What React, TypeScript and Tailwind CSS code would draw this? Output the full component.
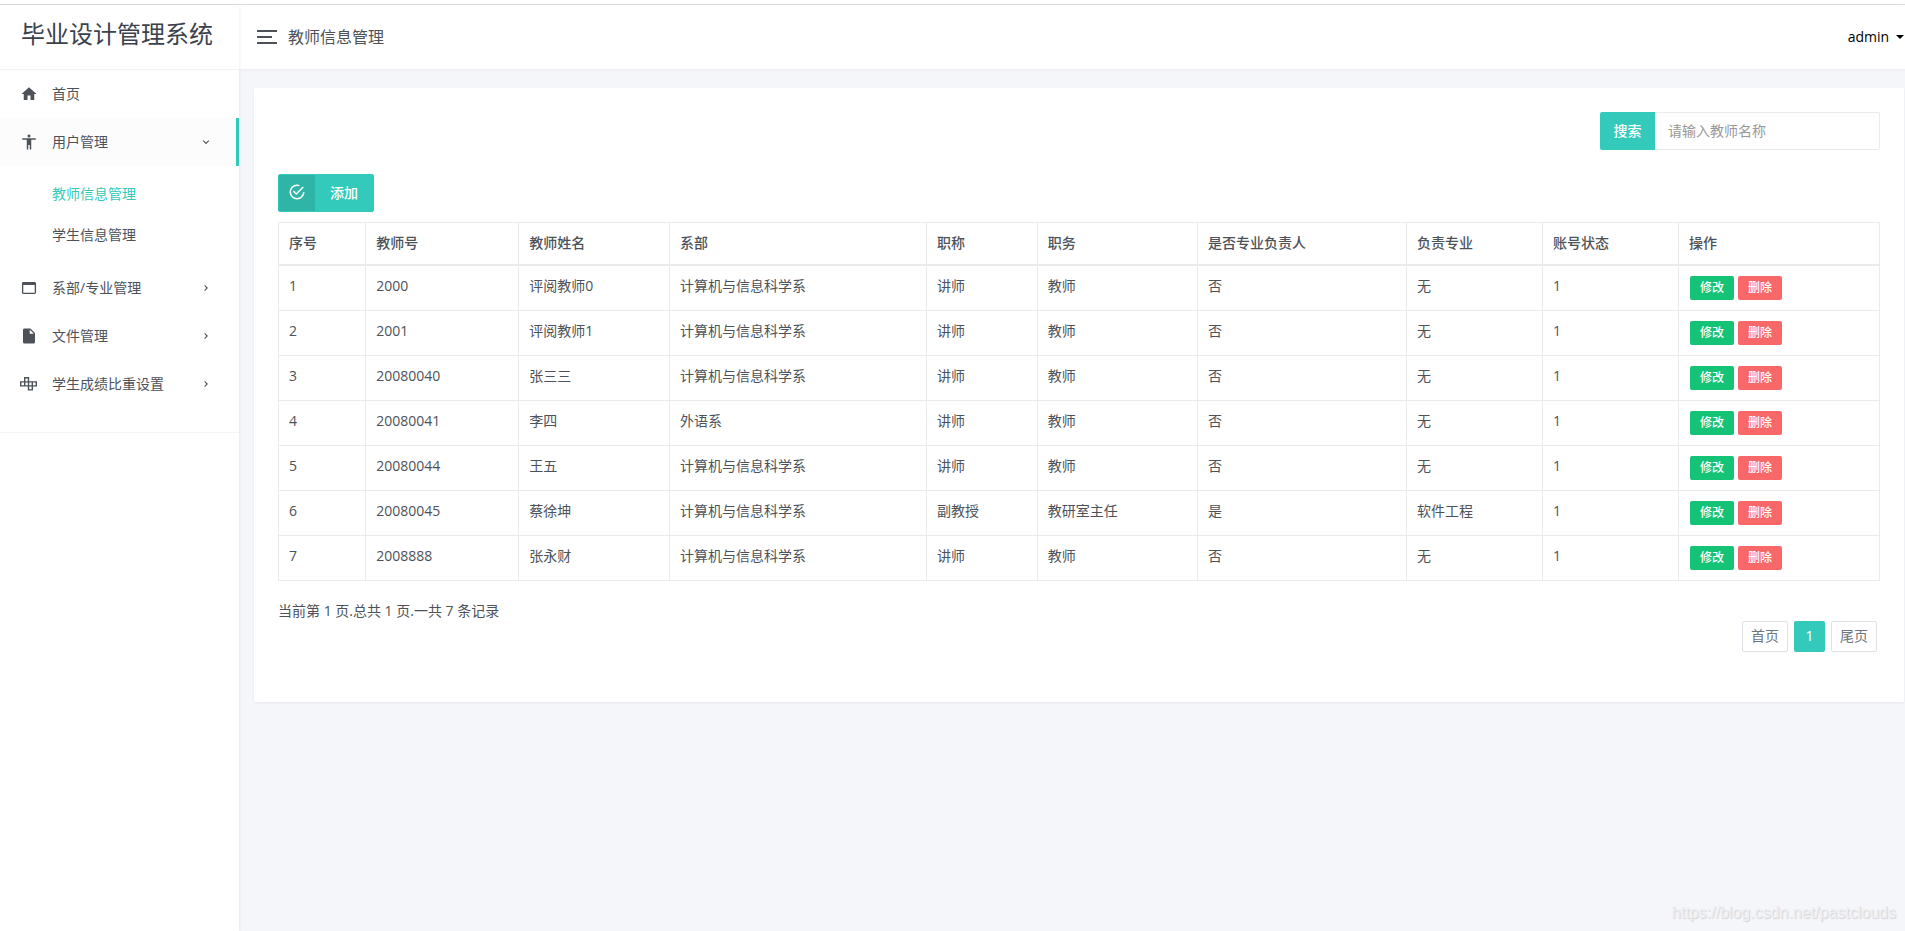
import React from "react";

const menuIcons = {
  home: "M10,20V14H14V20H19V12H22L12,3L2,12H5V20H10Z",
  person:
    "M12,2A2,2 0 0,1 14,4C14,5.11 13.1,6 12,6A2,2 0 0,1 10,4C10,2.89 10.89,2 12,2M21,9H15V22H13V16H11V22H9V9H3V7H21V9Z",
  window:
    "M4.5,4H19.5A1.9,1.9 0 0,1 21.4,5.9V18.1A1.9,1.9 0 0,1 19.5,20H4.5A1.9,1.9 0 0,1 2.6,18.1V5.9A1.9,1.9 0 0,1 4.5,4M4.4,8V18.2H19.6V8H4.4Z",
  file: "M13,9V3.5L18.5,9M6,2C4.89,2 4,2.89 4,4V20A2,2 0 0,0 6,22H18A2,2 0 0,0 20,20V8L14,2H6Z",
  check:
    "M20,12A8,8 0 0,1 12,20A8,8 0 0,1 4,12A8,8 0 0,1 12,4C12.76,4 13.5,4.11 14.2,4.31L15.77,2.74C14.61,2.26 13.34,2 12,2A10,10 0 0,0 2,12A10,10 0 0,0 12,22A10,10 0 0,0 22,12H20M7.91,10.08L6.5,11.5L11,16L21,6L19.59,4.58L11,13.17L7.91,10.08Z",
};

function Icon({ d }: { d: string }) {
  return (
    <svg viewBox="0 0 24 24" fill="currentColor" fillRule="evenodd" aria-hidden="true" className="size-[18px] shrink-0">
      <path d={d} />
    </svg>
  );
}

function BlocksIcon() {
  return (
    <svg viewBox="0 0 18 14" fill="none" stroke="currentColor" strokeWidth="1.4" aria-hidden="true" className="h-3.5 w-[18px] shrink-0">
      <path d="M4.7,0.7H8.5V4.9H16.3V8.9H12.3V12.9H8.5V8.9H0.7V4.9H4.7ZM4.7,4.9V8.9M8.5,4.9V8.9M12.3,4.9V8.9M4.7,4.9H8.5M8.5,8.9H12.3" />
    </svg>
  );
}

function Chevron({ open = false }: { open?: boolean }) {
  return (
    <svg
      viewBox="0 0 8 8"
      fill="none"
      stroke="currentColor"
      strokeWidth="1.1"
      aria-hidden="true"
      className="ml-auto mr-[26px] size-2"
    >
      <path d={open ? "M1.2,2.6L4,5.4L6.8,2.6" : "M2.6,1.4L5.2,4L2.6,6.6"} />
    </svg>
  );
}

function MenuItem({ icon, label, state }: { icon: React.ReactNode; label: string; state?: "open" | "closed" }) {
  const open = state === "open";
  return (
    <a
      href="#"
      className={`flex h-12 items-center pl-5 ${open ? "border-r-3 border-[#33cabb] bg-[#fcfcfc]" : "pr-[3px]"}`}
    >
      <span className="flex w-[18px] justify-center">{icon}</span>
      <span className="ml-3.5">{label}</span>
      {state && <Chevron open={open} />}
    </a>
  );
}

const columns = [
  { title: "序号", width: "w-[5.45%]" },
  { title: "教师号", width: "w-[9.55%]" },
  { title: "教师姓名", width: "w-[9.43%]" },
  { title: "系部", width: "w-[16.04%]" },
  { title: "职称", width: "w-[6.93%]" },
  { title: "职务", width: "w-[10%]" },
  { title: "是否专业负责人", width: "w-[13.05%]" },
  { title: "负责专业", width: "w-[8.5%]" },
  { title: "账号状态", width: "w-[8.5%]" },
  { title: "操作", width: "w-[12.55%]" },
];

const rows = [
  ["1", "2000", "评阅教师0", "计算机与信息科学系", "讲师", "教师", "否", "无", "1"],
  ["2", "2001", "评阅教师1", "计算机与信息科学系", "讲师", "教师", "否", "无", "1"],
  ["3", "20080040", "张三三", "计算机与信息科学系", "讲师", "教师", "否", "无", "1"],
  ["4", "20080041", "李四", "外语系", "讲师", "教师", "否", "无", "1"],
  ["5", "20080044", "王五", "计算机与信息科学系", "讲师", "教师", "否", "无", "1"],
  ["6", "20080045", "蔡徐坤", "计算机与信息科学系", "副教授", "教研室主任", "是", "软件工程", "1"],
  ["7", "2008888", "张永财", "计算机与信息科学系", "讲师", "教师", "否", "无", "1"],
];

function Sidebar() {
  return (
    <aside className="z-10 flex w-[239px] shrink-0 flex-col bg-white shadow-[0_1px_4px_rgba(0,21,41,0.08)]">
      <div className="h-[65px] border-b border-[#f2f3f5] pl-[21px] pt-[11px]">
        <a href="#" className="block whitespace-nowrap text-2xl leading-9 text-[#3b424c]">
          毕业设计管理系统
        </a>
      </div>
      <nav className="border-b border-[#f4f4f5] pb-6">
        <MenuItem icon={<Icon d={menuIcons.home} />} label="首页" />
        <MenuItem icon={<Icon d={menuIcons.person} />} label="用户管理" state="open" />
        <div className="flex flex-col pb-[9px] pt-[7px]">
          <a href="#" className="flex h-[41px] items-center pl-[52px] text-[#33cabb]">
            教师信息管理
          </a>
          <a href="#" className="flex h-[41px] items-center pl-[52px]">
            学生信息管理
          </a>
        </div>
        <MenuItem icon={<Icon d={menuIcons.window} />} label="系部/专业管理" state="closed" />
        <MenuItem icon={<Icon d={menuIcons.file} />} label="文件管理" state="closed" />
        <MenuItem icon={<BlocksIcon />} label="学生成绩比重设置" state="closed" />
      </nav>
    </aside>
  );
}

function TopBar() {
  return (
    <header className="flex h-16 items-center bg-white pl-[18px] shadow-[0_1px_3px_rgba(0,21,41,0.05)]">
      <button type="button" aria-label="菜单" className="flex w-5 flex-col gap-1">
        <span className="h-0.5 w-5 bg-[#4d5259]" />
        <span className="h-0.5 w-[15px] bg-[#4d5259]" />
        <span className="h-0.5 w-5 bg-[#4d5259]" />
      </button>
      <h1 className="ml-[11px] text-base">教师信息管理</h1>
      <button type="button" className="ml-auto flex items-center gap-[7px] pr-px text-black">
        admin
        <span className="border-x-4 border-t-4 border-x-transparent border-t-black" />
      </button>
    </header>
  );
}

function TeacherTable() {
  return (
    <table className="mt-2.5 w-full table-fixed border-collapse border border-[#ebebeb] text-left">
      <thead>
        <tr>
          {columns.map((c) => (
            <th
              key={c.title}
              scope="col"
              className={`${c.width} h-[42px] border border-b-2 border-[#ebebeb] px-2.5 align-middle font-medium`}
            >
              {c.title}
            </th>
          ))}
        </tr>
      </thead>
      <tbody>
        {rows.map((row) => (
          <tr key={row[0]} className="h-[45px] first:h-[46px]">
            {row.map((cell, i) => (
              <td key={i} className="border border-[#ebebeb] px-2.5 pt-2.5 align-top leading-5">
                {cell}
              </td>
            ))}
            <td className="border border-[#ebebeb] px-[11px] pt-2.5 align-top">
              <div className="flex gap-1 text-xs font-medium text-white">
                <button type="button" className="h-6 w-11 rounded-xs bg-[#15c377]">
                  修改
                </button>
                <button type="button" className="h-6 w-11 rounded-xs bg-[#f96868]">
                  删除
                </button>
              </div>
            </td>
          </tr>
        ))}
      </tbody>
    </table>
  );
}

export default function App() {
  return (
    <div className="relative flex min-h-screen flex-col bg-[#f5f6fa] font-['Open_Sans','Noto_Sans_CJK_SC',sans-serif] text-sm text-[#4d5259]">
      <div className="h-[5px] border-b border-[#dcdde0] bg-white" />
      <div className="flex grow">
        <Sidebar />
        <div className="flex min-w-0 grow flex-col">
          <TopBar />
          <main className="pl-[15px] pt-[19px]">
            <section className="mr-px bg-white px-6 pb-[50px] pt-6 shadow-[0_1px_3px_rgba(0,0,0,0.06)]">
              <form className="ml-auto flex h-[38px] w-[280px]" onSubmit={(e) => e.preventDefault()}>
                <button type="submit" className="w-[55px] shrink-0 rounded-l-xs bg-[#33cabb] font-medium text-white">
                  搜索
                </button>
                <input
                  type="text"
                  aria-label="教师名称"
                  placeholder="请输入教师名称"
                  className="min-w-0 grow rounded-r-xs border border-l-0 border-[#ebebeb] px-[13px] placeholder:text-[#999999]"
                />
              </form>
              <button
                type="button"
                className="mt-6 flex h-[38px] w-24 items-stretch rounded-xs border border-[#33cabb] bg-[#33cabb] font-medium text-white"
              >
                <span className="flex w-9 items-center justify-center bg-[#2fb5a8] pb-0.5">
                  <Icon d={menuIcons.check} />
                </span>
                <span className="flex grow items-center justify-center">添加</span>
              </button>
              <TeacherTable />
              <p className="mt-[19px] leading-[21px]">当前第 1 页.总共 1 页.一共 7 条记录</p>
              <nav aria-label="分页" className="mr-[3px] flex justify-end gap-1.5 text-[#6c757d]">
                <a href="#" className="flex h-[31px] items-center rounded-xs border border-[#dee2e6] px-2 pb-0.5">
                  首页
                </a>
                <a href="#" aria-current="page" className="flex h-[31px] w-[31px] items-center justify-center rounded-xs bg-[#33cabb] pb-0.5 text-white">
                  1
                </a>
                <a href="#" className="flex h-[31px] items-center rounded-xs border border-[#dee2e6] px-2 pb-0.5">
                  尾页
                </a>
              </nav>
            </section>
          </main>
        </div>
      </div>
      <div className="absolute bottom-1.5 right-[9px] font-['Liberation_Sans',sans-serif] text-base text-[#eeeff2] [text-shadow:1px_1px_1px_#d0d1d5]">
        https://blog.csdn.net/pastclouds
      </div>
    </div>
  );
}
